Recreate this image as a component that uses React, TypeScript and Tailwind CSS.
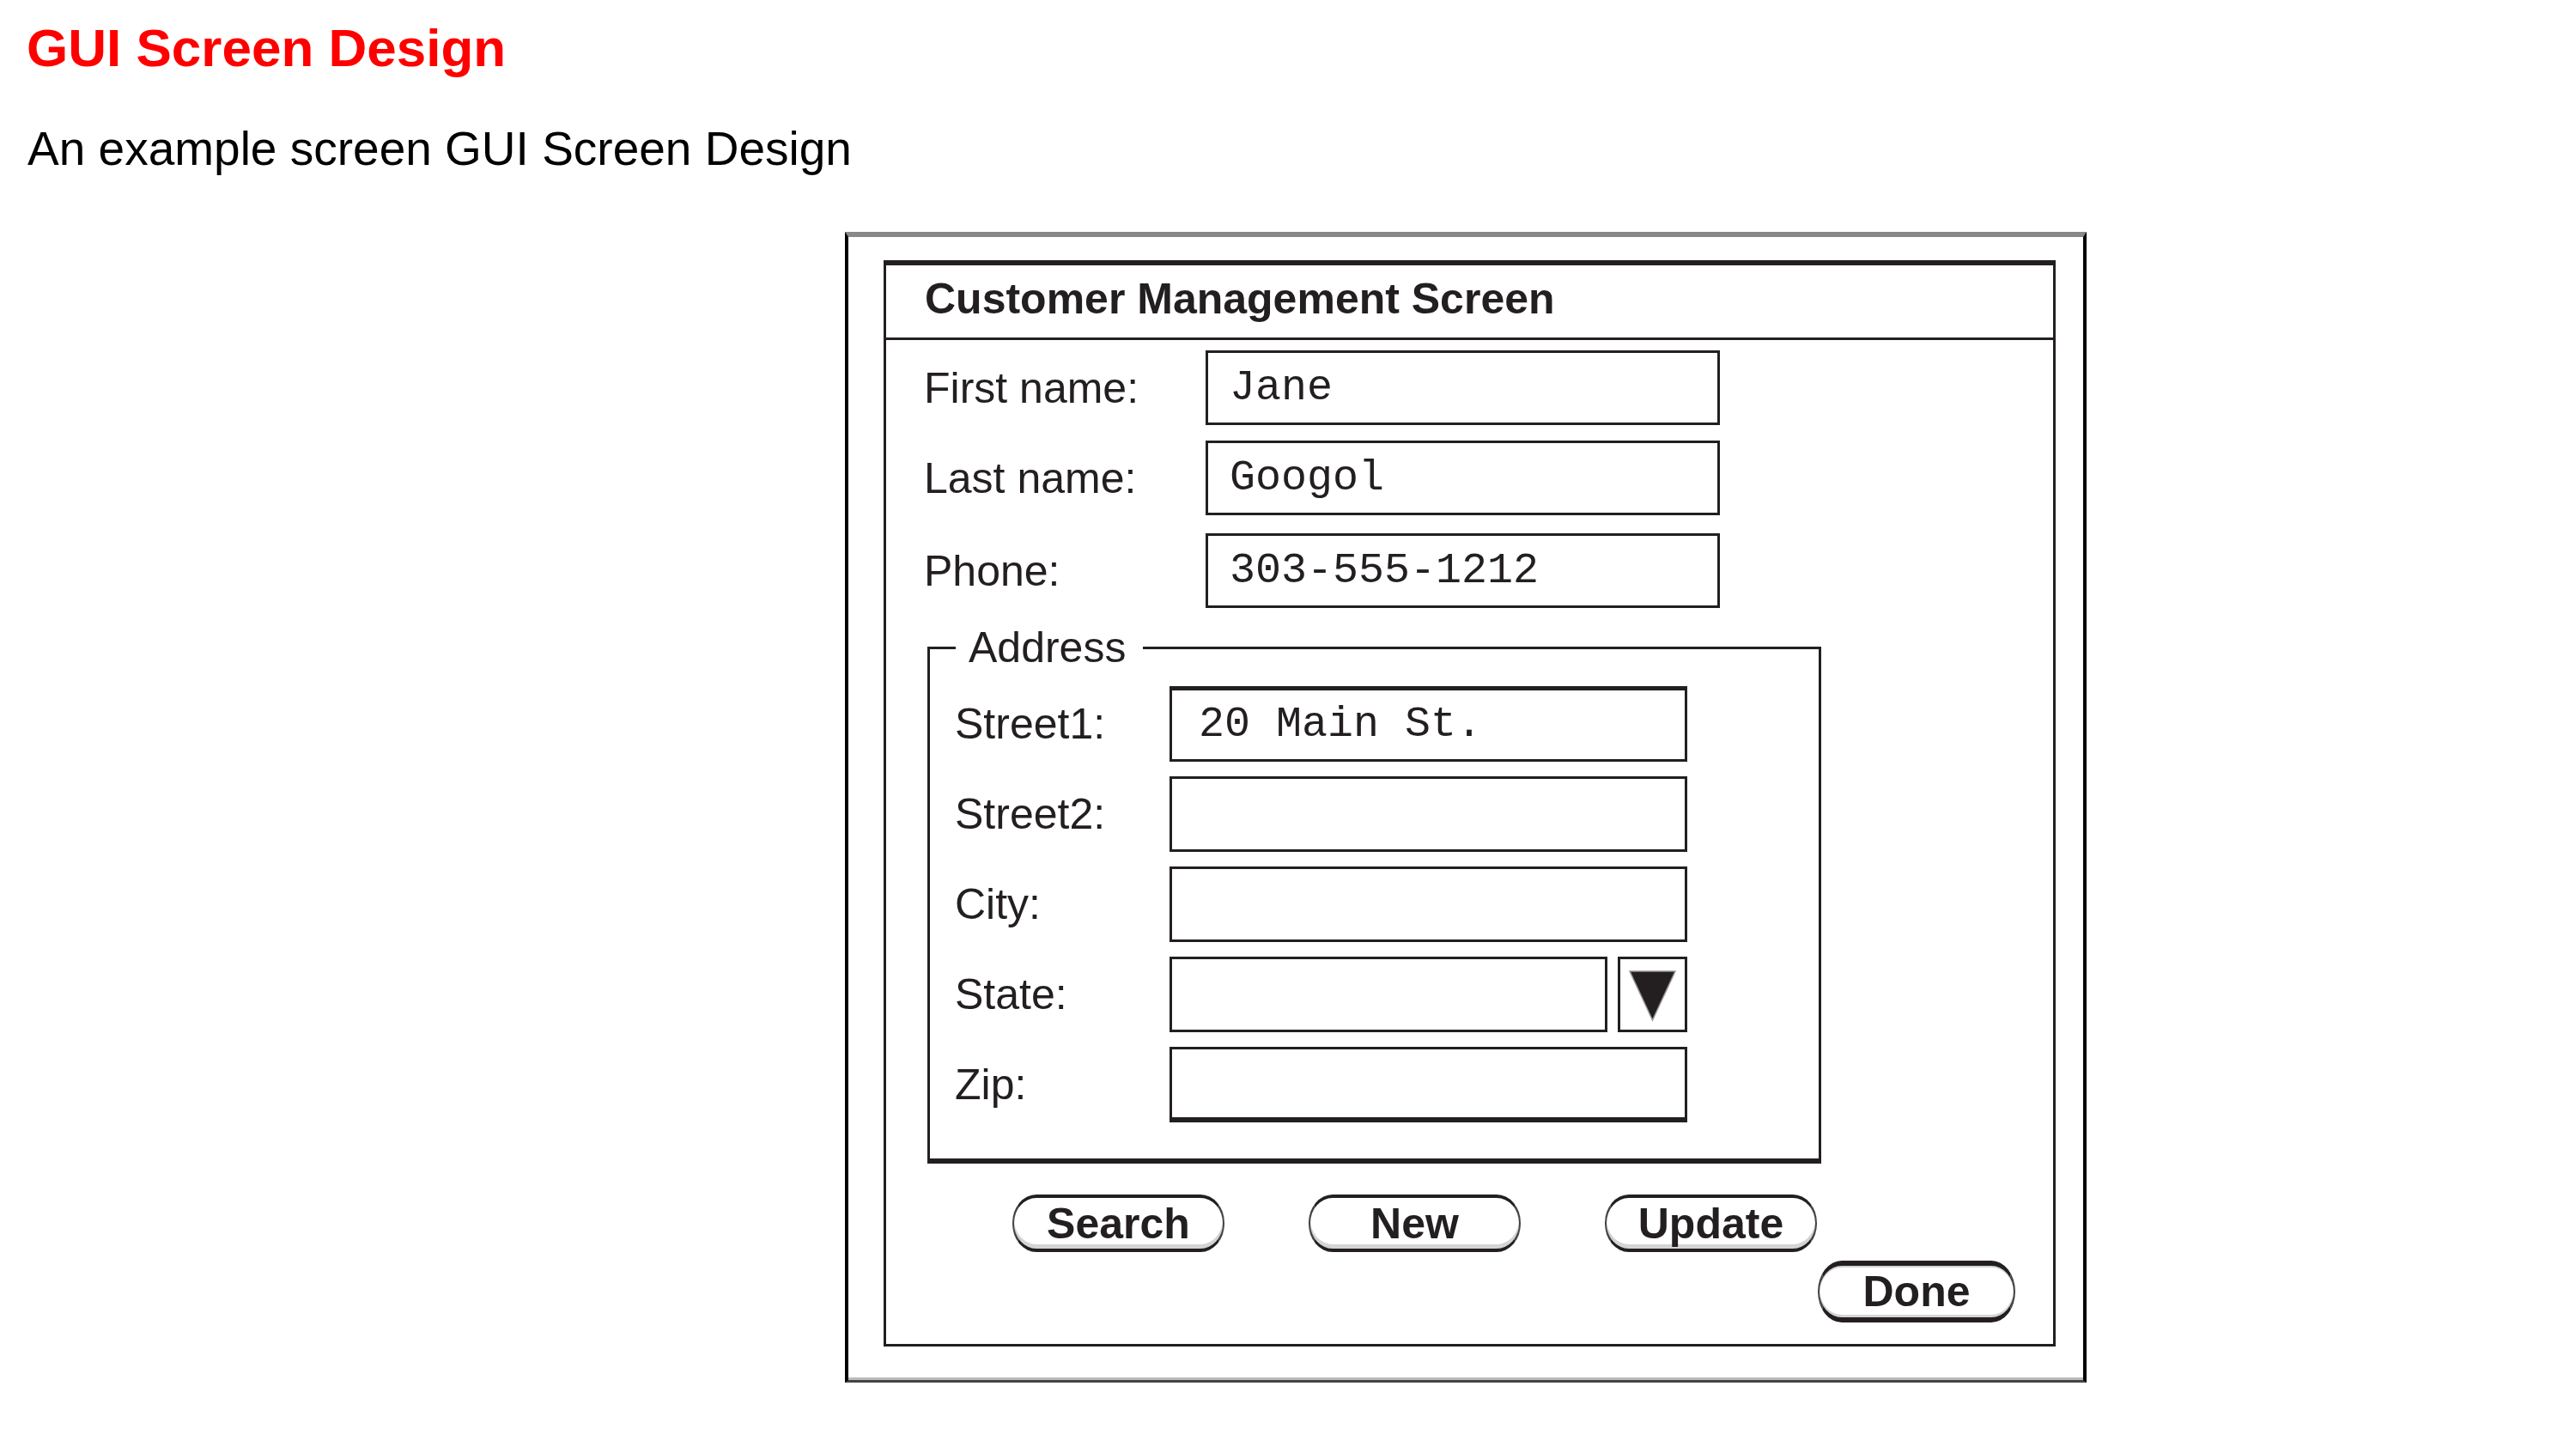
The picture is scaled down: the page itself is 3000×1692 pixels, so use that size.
import React from 'react';

type RowProps = {
  label: string;
  value?: string;
  labelWidth: string;
  labelPad: string;
  boxClass: string;
  className?: string;
};

function FieldRow({ label, value, labelWidth, labelPad, boxClass, className = '' }: RowProps) {
  return (
    <div className={`flex items-center ${className}`}>
      <div className={`${labelWidth} ${labelPad} text-[50px] leading-none`}>{label}</div>
      <div className={`flex items-center border-[3px] border-[#231f20] font-['Liberation_Mono','Courier_New',monospace] text-[50px] leading-none ${boxClass}`}>
        {value}
      </div>
    </div>
  );
}

function PillButton({ children, wide = true }: { children: React.ReactNode; wide?: boolean }) {
  return (
    <button
      className={`flex items-center justify-center bg-white text-[50px] font-bold leading-none text-[#231f20] ${
        wide
          ? 'h-[67px] w-[247px] rounded-[28px/33px] border-x-2 border-t-[4px] border-b-[4px] border-x-[#444] border-t-[#231f20] border-b-[#231f20] shadow-[inset_0_-5px_0_#d4d4d4]'
          : 'h-[72px] w-[230px] rounded-[28px/36px] border-x-2 border-t-[6px] border-b-[6px] border-x-[#444] border-t-[#231f20] border-b-[#231f20] shadow-[inset_0_-3px_0_#d4d4d4,inset_0_2px_0_#d4d4d4]'
      }`}
    >
      {children}
    </button>
  );
}

export default function App() {
  return (
    <main className="min-h-screen w-[3000px] bg-white font-['Liberation_Sans',Arial,sans-serif] text-black">
      {/* Page heading */}
      <h1 className="pl-[31px] pt-[25px] text-[62px] font-bold leading-none text-[#ff0000]">GUI Screen Design</h1>
      <p className="mt-[59px] pl-[32px] text-[55px] leading-none">An example screen GUI Screen Design</p>

      {/* Screen mockup frame */}
      <div className="ml-[984px] mt-[69px] h-[1340px] w-[1446px] border-b-[3px] border-l-4 border-r-4 border-t-[6px] border-b-[#444] border-l-black border-r-black border-t-[#888] pl-[41px] pt-[27px] shadow-[inset_0_-3px_0_#bbb]">
        <div className="flex h-[1265px] w-[1365px] flex-col border-[3px] border-t-[6px] border-[#231f20] text-[#231f20]">
          {/* Title bar */}
          <div className="h-[87px] border-b-[3px] border-[#231f20] pl-[45px] pt-[14px] text-[50px] font-bold leading-none">
            Customer Management Screen
          </div>

          <FieldRow className="mt-[12px]" label="First name:" value="Jane" labelWidth="w-[372px]" labelPad="pl-[44px]" boxClass="h-[87px] w-[599px] pl-[25px]" />
          <FieldRow className="mt-[18px]" label="Last name:" value="Googol" labelWidth="w-[372px]" labelPad="pl-[44px]" boxClass="h-[87px] w-[599px] pl-[25px]" />
          <FieldRow className="mt-[21px]" label="Phone:" value="303-555-1212" labelWidth="w-[372px]" labelPad="pl-[44px]" boxClass="h-[87px] w-[599px] pl-[25px]" />

          {/* Address group */}
          <fieldset className="ml-[48px] mt-[21px] w-[1041px] border-[3px] border-b-[6px] border-[#231f20] pb-[42px]">
            <legend className="ml-[30px] pl-[15px] pr-[20px] text-[50px] leading-none">Address</legend>
            <FieldRow className="mt-[20px]" label="Street1:" value="20 Main St." labelWidth="w-[279px]" labelPad="pl-[29px]" boxClass="h-[88px] w-[603px] border-t-[5px] pl-[31px]" />
            <FieldRow className="mt-[17px]" label="Street2:" labelWidth="w-[279px]" labelPad="pl-[29px]" boxClass="h-[88px] w-[603px]" />
            <FieldRow className="mt-[17px]" label="City:" labelWidth="w-[279px]" labelPad="pl-[29px]" boxClass="h-[88px] w-[603px]" />
            <div className="mt-[17px] flex h-[88px] items-center">
              <div className="w-[279px] pl-[29px] text-[50px] leading-none">State:</div>
              <div className="h-[88px] w-[510px] border-[3px] border-[#231f20]" />
              <div className="ml-[12px] flex h-[88px] w-[81px] items-start justify-center border-[3px] border-[#231f20] pt-[13px]">
                <svg width="55" height="60" viewBox="0 0 55 60">
                  <polygon points="1,1 54,1 27.5,58" fill="#231f20" stroke="#9a9a9a" strokeWidth="1.5" />
                </svg>
              </div>
            </div>
            <FieldRow className="mt-[17px]" label="Zip:" labelWidth="w-[279px]" labelPad="pl-[29px]" boxClass="h-[88px] w-[603px] border-b-[6px]" />
          </fieldset>

          {/* Actions */}
          <div className="mt-[36px] flex gap-[98px] pl-[147px]">
            <PillButton>Search</PillButton>
            <PillButton>New</PillButton>
            <PillButton>Update</PillButton>
          </div>
          <div className="mt-[10px] flex justify-end pr-[44px]">
            <PillButton wide={false}>Done</PillButton>
          </div>
        </div>
      </div>
    </main>
  );
}
